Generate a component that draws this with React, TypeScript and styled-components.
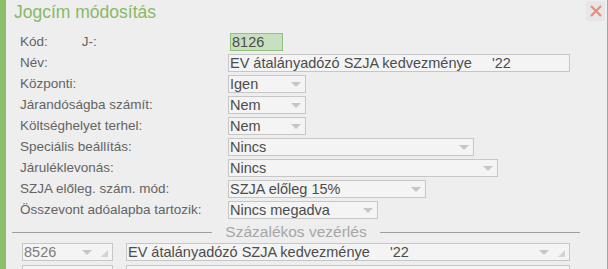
import React from "react";
import styled, { createGlobalStyle } from "styled-components";

const Global = createGlobalStyle`
  html, body { margin: 0; padding: 0; background: #eeeeee; }
  body { font-family: "Liberation Sans", Arial, sans-serif; }
`;

const Frame = styled.div`
  display: flex;
  width: 608px;
  height: 269px;
  overflow: hidden;
  background: #eeeeee;
`;

const SideBar = styled.div`
  width: 6px;
  flex: none;
  background: #8cbf6c;
`;

const Panel = styled.div`
  flex: 1;
  display: flex;
  flex-direction: column;
  border-right: 1px solid #8cbf6c;
  min-width: 0;
  & > * { flex: none; }
`;

const Header = styled.div`
  display: flex;
  justify-content: space-between;
  align-items: flex-start;
  height: 30px;
  padding-left: 8px;
`;

const Title = styled.div`
  margin-top: 2px;
  font-size: 17.5px;
  line-height: 21px;
  color: #87b966;
`;

const Close = styled.div`
  margin-top: 1px;
  margin-right: 2px;
  width: 19px;
  height: 20px;
  background: #e7e7e7;
  display: flex;
  align-items: center;
  justify-content: center;
`;

const Form = styled.div`
  display: grid;
  grid-template-columns: 208px 1fr;
  row-gap: 3px;
  margin-top: 3px;
  padding-left: 14px;
`;

const Label = styled.div`
  display: flex;
  font-size: 13.5px;
  line-height: 18px;
  color: #646464;
  white-space: nowrap;
`;

const SubLabel = styled.span`
  margin-left: 34px;
`;

const Field = styled.div<{ $w: number; $green?: boolean; $offset?: number }>`
  position: relative;
  box-sizing: border-box;
  width: ${(p) => p.$w}px;
  height: 18px;
  margin-left: ${(p) => p.$offset ?? 0}px;
  padding-left: 1px;
  border: 1px solid ${(p) => (p.$green ? "#8fc27a" : "#c6c6c6")};
  background: ${(p) => (p.$green ? "#c7e1c0" : "#f4f4f4")};
  font-size: 14.5px;
  line-height: 16px;
  color: #4c4c4c;
  white-space: pre;
  overflow: hidden;
`;

const Arrow = styled.span<{ $right: number }>`
  position: absolute;
  right: ${(p) => p.$right}px;
  top: 6px;
  width: 0;
  height: 0;
  border-left: 5px solid transparent;
  border-right: 5px solid transparent;
  border-top: 5px solid #c6c6c6;
`;

const Grip = styled.span`
  position: absolute;
  right: 4px;
  bottom: 3px;
  width: 0;
  height: 0;
  border-left: 7px solid transparent;
  border-bottom: 7px solid #d2d2d2;
`;

const Divider = styled.div`
  display: flex;
  align-items: center;
  gap: 13px;
  margin: 4px 27px 0 6px;
  &::before, &::after {
    content: "";
    flex: 1;
    height: 1px;
    background: #9e9e9e;
  }
`;

const DividerText = styled.span`
  flex: none;
  white-space: nowrap;
  font-size: 15.5px;
  line-height: 18px;
  color: #a6a6a6;
`;

const Grid = styled.div`
  display: grid;
  grid-template-columns: 91px 444px;
  column-gap: 13px;
  row-gap: 4px;
  margin-top: 2px;
  padding-left: 16px;
`;

const Cell = styled.div<{ $light?: boolean }>`
  position: relative;
  box-sizing: border-box;
  height: 18px;
  padding-left: 1px;
  border: 1px solid #c6c6c6;
  background: #f4f4f4;
  font-size: 14.5px;
  line-height: 16px;
  color: ${(p) => (p.$light ? "#7c7c7c" : "#4c4c4c")};
  white-space: pre;
`;

type Row = { label: string; value: string; w: number; drop?: boolean };

const rows: Row[] = [
  { label: "Név:", value: "EV átalányadózó SZJA kedvezménye     '22", w: 342 },
  { label: "Központi:", value: "Igen", w: 78, drop: true },
  { label: "Járandóságba számít:", value: "Nem", w: 78, drop: true },
  { label: "Költséghelyet terhel:", value: "Nem", w: 78, drop: true },
  { label: "Speciális beállítás:", value: "Nincs", w: 246, drop: true },
  { label: "Járuléklevonás:", value: "Nincs", w: 270, drop: true },
  { label: "SZJA előleg. szám. mód:", value: "SZJA előleg 15%", w: 198, drop: true },
  { label: "Összevont adóalapba tartozik:", value: "Nincs megadva", w: 150, drop: true },
];

const CloseIcon = () => (
  <svg width="12" height="12" viewBox="0 0 12 12">
    <path d="M1 1 L11 11 M11 1 L1 11" stroke="#e38e7e" strokeWidth="2.2" />
  </svg>
);

export default function App() {
  return (
    <>
      <Global />
      <Frame>
        <SideBar />
        <Panel>
          <Header>
            <Title>Jogcím módosítás</Title>
            <Close>
              <CloseIcon />
            </Close>
          </Header>
          <Form>
            <Label>
              Kód:<SubLabel>J-:</SubLabel>
            </Label>
            <Field $w={53} $green $offset={2}>
              8126
            </Field>
            {rows.map((r) => (
              <React.Fragment key={r.label}>
                <Label>{r.label}</Label>
                <Field $w={r.w}>
                  {r.value}
                  {r.drop && <Arrow $right={4} />}
                </Field>
              </React.Fragment>
            ))}
          </Form>
          <Divider>
            <DividerText>Százalékos vezérlés</DividerText>
          </Divider>
          <Grid>
            <Cell $light>
              8526
              <Arrow $right={20} />
              <Grip />
            </Cell>
            <Cell>
              {"EV átalányadózó SZJA kedvezménye     '22"}
              <Arrow $right={20} />
              <Grip />
            </Cell>
            <Cell />
            <Cell />
          </Grid>
        </Panel>
      </Frame>
    </>
  );
}
